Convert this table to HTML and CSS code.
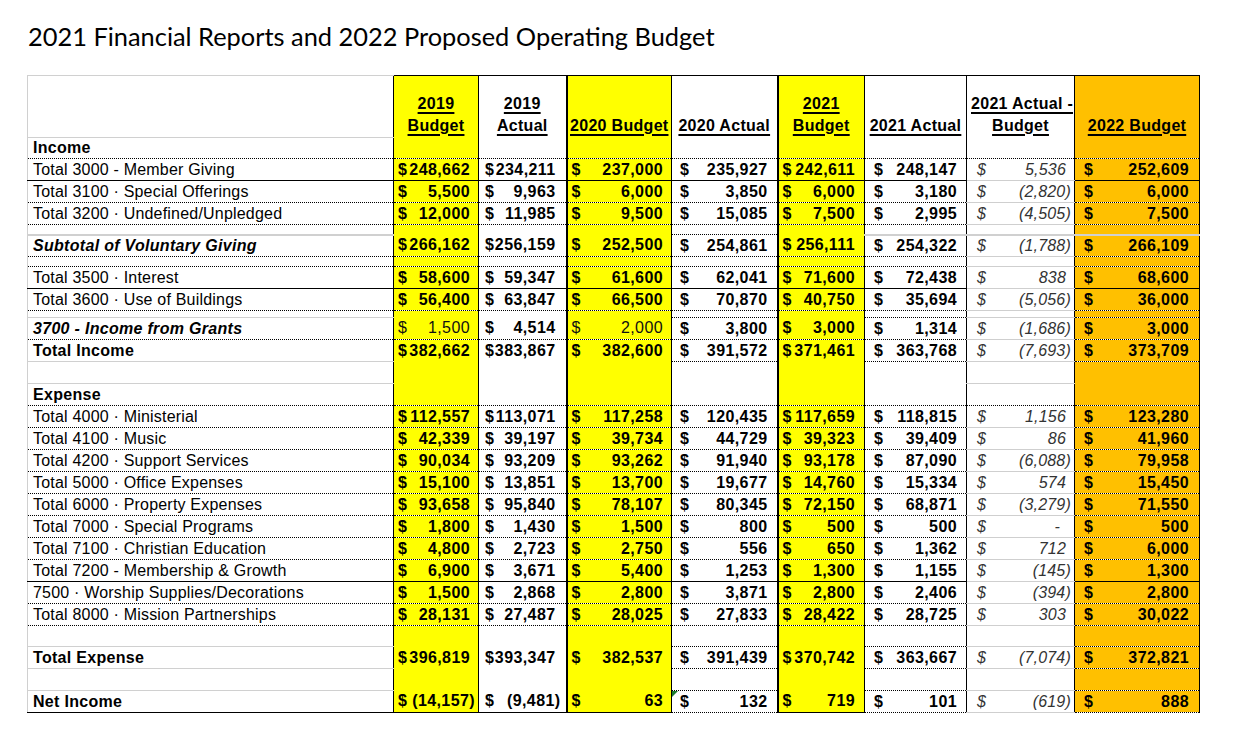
FILE: index.html
```html
<!DOCTYPE html>
<html lang="en">
<head>
<meta charset="utf-8">
<title>2021 Financial Reports and 2022 Proposed Operating Budget</title>
<link rel="stylesheet" href="styles.css">
</head>
<body>
<div class="page">
<h1 class="title">2021 Financial Reports and 2022 Proposed Operating Budget</h1>
<table class="budget">
<colgroup>
<col class="c-lbl"><col class="c-y19b"><col class="c-a19"><col class="c-y20b"><col class="c-a20"><col class="c-y21b"><col class="c-a21"><col class="c-dif"><col class="c-b22">
</colgroup>
<thead>
<tr class="hdr">
<th class="lh"></th>
<th>2019<br>Budget</th>
<th>2019<br>Actual</th>
<th>2020 Budget</th>
<th>2020 Actual</th>
<th>2021<br>Budget</th>
<th>2021 Actual</th>
<th><div class="hl">2021 Actual -</div><div>Budget</div></th>
<th>2022 Budget</th>
</tr>
</thead>
<tbody>
<tr class="bd sec h21"><td class="lb">Income</td><td></td><td></td><td></td><td></td><td></td><td></td><td></td><td></td></tr>
<tr class="bs"><td>Total 3000 - Member Giving</td>
<td><div class="v"><span>$</span><span class="n">248,662</span></div></td>
<td><div class="v"><span>$</span><span class="n">234,211</span></div></td>
<td><div class="v"><span>$</span><span class="n">237,000</span></div></td>
<td><div class="v"><span>$</span><span class="n">235,927</span></div></td>
<td><div class="v"><span>$</span><span class="n">242,611</span></div></td>
<td><div class="v"><span>$</span><span class="n">248,147</span></div></td>
<td><div class="v"><span>$</span><span class="n">5,536</span></div></td>
<td><div class="v"><span>$</span><span class="n">252,609</span></div></td></tr>
<tr class="bd"><td>Total 3100 · Special Offerings</td>
<td><div class="v"><span>$</span><span class="n">5,500</span></div></td>
<td><div class="v"><span>$</span><span class="n">9,963</span></div></td>
<td><div class="v"><span>$</span><span class="n">6,000</span></div></td>
<td><div class="v"><span>$</span><span class="n">3,850</span></div></td>
<td><div class="v"><span>$</span><span class="n">6,000</span></div></td>
<td><div class="v"><span>$</span><span class="n">3,180</span></div></td>
<td><div class="v"><span>$</span><span class="n ng">(2,820)</span></div></td>
<td><div class="v"><span>$</span><span class="n">6,000</span></div></td></tr>
<tr class="bd"><td>Total 3200 · Undefined/Unpledged</td>
<td><div class="v"><span>$</span><span class="n">12,000</span></div></td>
<td><div class="v"><span>$</span><span class="n">11,985</span></div></td>
<td><div class="v"><span>$</span><span class="n">9,500</span></div></td>
<td><div class="v"><span>$</span><span class="n">15,085</span></div></td>
<td><div class="v"><span>$</span><span class="n">7,500</span></div></td>
<td><div class="v"><span>$</span><span class="n">2,995</span></div></td>
<td><div class="v"><span>$</span><span class="n ng">(4,505)</span></div></td>
<td><div class="v"><span>$</span><span class="n">7,500</span></div></td></tr>
<tr class="bg2 h10"><td></td><td></td><td></td><td></td><td></td><td></td><td></td><td></td><td></td></tr>
<tr class="bd"><td class="lbi">Subtotal of Voluntary Giving</td>
<td><div class="v"><span>$</span><span class="n">266,162</span></div></td>
<td><div class="v"><span>$</span><span class="n">256,159</span></div></td>
<td><div class="v"><span>$</span><span class="n">252,500</span></div></td>
<td><div class="v"><span>$</span><span class="n">254,861</span></div></td>
<td><div class="v"><span>$</span><span class="n">256,111</span></div></td>
<td><div class="v"><span>$</span><span class="n">254,322</span></div></td>
<td><div class="v"><span>$</span><span class="n ng">(1,788)</span></div></td>
<td><div class="v"><span>$</span><span class="n">266,109</span></div></td></tr>
<tr class="bd h10"><td></td><td></td><td></td><td></td><td></td><td></td><td></td><td></td><td></td></tr>
<tr class="bs"><td>Total 3500 · Interest</td>
<td><div class="v"><span>$</span><span class="n">58,600</span></div></td>
<td><div class="v"><span>$</span><span class="n">59,347</span></div></td>
<td><div class="v"><span>$</span><span class="n">61,600</span></div></td>
<td><div class="v"><span>$</span><span class="n">62,041</span></div></td>
<td><div class="v"><span>$</span><span class="n">71,600</span></div></td>
<td><div class="v"><span>$</span><span class="n">72,438</span></div></td>
<td><div class="v"><span>$</span><span class="n">838</span></div></td>
<td><div class="v"><span>$</span><span class="n">68,600</span></div></td></tr>
<tr class="bd"><td>Total 3600 · Use of Buildings</td>
<td><div class="v"><span>$</span><span class="n">56,400</span></div></td>
<td><div class="v"><span>$</span><span class="n">63,847</span></div></td>
<td><div class="v"><span>$</span><span class="n">66,500</span></div></td>
<td><div class="v"><span>$</span><span class="n">70,870</span></div></td>
<td><div class="v"><span>$</span><span class="n">40,750</span></div></td>
<td><div class="v"><span>$</span><span class="n">35,694</span></div></td>
<td><div class="v"><span>$</span><span class="n ng">(5,056)</span></div></td>
<td><div class="v"><span>$</span><span class="n">36,000</span></div></td></tr>
<tr class="bg h7"><td></td><td></td><td></td><td></td><td></td><td></td><td></td><td></td><td></td></tr>
<tr class="bd"><td class="lbi">3700 - Income from Grants</td>
<td class="rg"><div class="v"><span>$</span><span class="n">1,500</span></div></td>
<td><div class="v"><span>$</span><span class="n">4,514</span></div></td>
<td class="rg"><div class="v"><span>$</span><span class="n">2,000</span></div></td>
<td><div class="v"><span>$</span><span class="n">3,800</span></div></td>
<td><div class="v"><span>$</span><span class="n">3,000</span></div></td>
<td><div class="v"><span>$</span><span class="n">1,314</span></div></td>
<td><div class="v"><span>$</span><span class="n ng">(1,686)</span></div></td>
<td><div class="v"><span>$</span><span class="n">3,000</span></div></td></tr>
<tr class="bg"><td class="lb">Total Income</td>
<td><div class="v"><span>$</span><span class="n">382,662</span></div></td>
<td><div class="v"><span>$</span><span class="n">383,867</span></div></td>
<td><div class="v"><span>$</span><span class="n">382,600</span></div></td>
<td><div class="v"><span>$</span><span class="n">391,572</span></div></td>
<td><div class="v"><span>$</span><span class="n">371,461</span></div></td>
<td><div class="v"><span>$</span><span class="n">363,768</span></div></td>
<td><div class="v"><span>$</span><span class="n ng">(7,693)</span></div></td>
<td><div class="v"><span>$</span><span class="n">373,709</span></div></td></tr>
<tr class="bgl"><td></td><td></td><td></td><td></td><td></td><td></td><td></td><td></td><td></td></tr>
<tr class="bd sec"><td class="lb">Expense</td><td></td><td></td><td></td><td></td><td></td><td></td><td></td><td></td></tr>
<tr class="bd"><td>Total 4000 · Ministerial</td>
<td><div class="v"><span>$</span><span class="n">112,557</span></div></td>
<td><div class="v"><span>$</span><span class="n">113,071</span></div></td>
<td><div class="v"><span>$</span><span class="n">117,258</span></div></td>
<td><div class="v"><span>$</span><span class="n">120,435</span></div></td>
<td><div class="v"><span>$</span><span class="n">117,659</span></div></td>
<td><div class="v"><span>$</span><span class="n">118,815</span></div></td>
<td><div class="v"><span>$</span><span class="n">1,156</span></div></td>
<td><div class="v"><span>$</span><span class="n">123,280</span></div></td></tr>
<tr class="bd"><td>Total 4100 · Music</td>
<td><div class="v"><span>$</span><span class="n">42,339</span></div></td>
<td><div class="v"><span>$</span><span class="n">39,197</span></div></td>
<td><div class="v"><span>$</span><span class="n">39,734</span></div></td>
<td><div class="v"><span>$</span><span class="n">44,729</span></div></td>
<td><div class="v"><span>$</span><span class="n">39,323</span></div></td>
<td><div class="v"><span>$</span><span class="n">39,409</span></div></td>
<td><div class="v"><span>$</span><span class="n">86</span></div></td>
<td><div class="v"><span>$</span><span class="n">41,960</span></div></td></tr>
<tr class="bd"><td>Total 4200 · Support Services</td>
<td><div class="v"><span>$</span><span class="n">90,034</span></div></td>
<td><div class="v"><span>$</span><span class="n">93,209</span></div></td>
<td><div class="v"><span>$</span><span class="n">93,262</span></div></td>
<td><div class="v"><span>$</span><span class="n">91,940</span></div></td>
<td><div class="v"><span>$</span><span class="n">93,178</span></div></td>
<td><div class="v"><span>$</span><span class="n">87,090</span></div></td>
<td><div class="v"><span>$</span><span class="n ng">(6,088)</span></div></td>
<td><div class="v"><span>$</span><span class="n">79,958</span></div></td></tr>
<tr class="bd"><td>Total 5000 · Office Expenses</td>
<td><div class="v"><span>$</span><span class="n">15,100</span></div></td>
<td><div class="v"><span>$</span><span class="n">13,851</span></div></td>
<td><div class="v"><span>$</span><span class="n">13,700</span></div></td>
<td><div class="v"><span>$</span><span class="n">19,677</span></div></td>
<td><div class="v"><span>$</span><span class="n">14,760</span></div></td>
<td><div class="v"><span>$</span><span class="n">15,334</span></div></td>
<td><div class="v"><span>$</span><span class="n">574</span></div></td>
<td><div class="v"><span>$</span><span class="n">15,450</span></div></td></tr>
<tr class="bd"><td>Total 6000 · Property Expenses</td>
<td><div class="v"><span>$</span><span class="n">93,658</span></div></td>
<td><div class="v"><span>$</span><span class="n">95,840</span></div></td>
<td><div class="v"><span>$</span><span class="n">78,107</span></div></td>
<td><div class="v"><span>$</span><span class="n">80,345</span></div></td>
<td><div class="v"><span>$</span><span class="n">72,150</span></div></td>
<td><div class="v"><span>$</span><span class="n">68,871</span></div></td>
<td><div class="v"><span>$</span><span class="n ng">(3,279)</span></div></td>
<td><div class="v"><span>$</span><span class="n">71,550</span></div></td></tr>
<tr class="bd"><td>Total 7000 · Special Programs</td>
<td><div class="v"><span>$</span><span class="n">1,800</span></div></td>
<td><div class="v"><span>$</span><span class="n">1,430</span></div></td>
<td><div class="v"><span>$</span><span class="n">1,500</span></div></td>
<td><div class="v"><span>$</span><span class="n">800</span></div></td>
<td><div class="v"><span>$</span><span class="n">500</span></div></td>
<td><div class="v"><span>$</span><span class="n">500</span></div></td>
<td><div class="v"><span>$</span><span class="n zero">-</span></div></td>
<td><div class="v"><span>$</span><span class="n">500</span></div></td></tr>
<tr class="bd"><td>Total 7100 · Christian Education</td>
<td><div class="v"><span>$</span><span class="n">4,800</span></div></td>
<td><div class="v"><span>$</span><span class="n">2,723</span></div></td>
<td><div class="v"><span>$</span><span class="n">2,750</span></div></td>
<td><div class="v"><span>$</span><span class="n">556</span></div></td>
<td><div class="v"><span>$</span><span class="n">650</span></div></td>
<td><div class="v"><span>$</span><span class="n">1,362</span></div></td>
<td><div class="v"><span>$</span><span class="n">712</span></div></td>
<td><div class="v"><span>$</span><span class="n">6,000</span></div></td></tr>
<tr class="bs"><td>Total 7200 - Membership &amp; Growth</td>
<td><div class="v"><span>$</span><span class="n">6,900</span></div></td>
<td><div class="v"><span>$</span><span class="n">3,671</span></div></td>
<td><div class="v"><span>$</span><span class="n">5,400</span></div></td>
<td><div class="v"><span>$</span><span class="n">1,253</span></div></td>
<td><div class="v"><span>$</span><span class="n">1,300</span></div></td>
<td><div class="v"><span>$</span><span class="n">1,155</span></div></td>
<td><div class="v"><span>$</span><span class="n ng">(145)</span></div></td>
<td><div class="v"><span>$</span><span class="n">1,300</span></div></td></tr>
<tr class="bd"><td>7500 · Worship Supplies/Decorations</td>
<td><div class="v"><span>$</span><span class="n">1,500</span></div></td>
<td><div class="v"><span>$</span><span class="n">2,868</span></div></td>
<td><div class="v"><span>$</span><span class="n">2,800</span></div></td>
<td><div class="v"><span>$</span><span class="n">3,871</span></div></td>
<td><div class="v"><span>$</span><span class="n">2,800</span></div></td>
<td><div class="v"><span>$</span><span class="n">2,406</span></div></td>
<td><div class="v"><span>$</span><span class="n ng">(394)</span></div></td>
<td><div class="v"><span>$</span><span class="n">2,800</span></div></td></tr>
<tr class="bd"><td>Total 8000 · Mission Partnerships</td>
<td><div class="v"><span>$</span><span class="n">28,131</span></div></td>
<td><div class="v"><span>$</span><span class="n">27,487</span></div></td>
<td><div class="v"><span>$</span><span class="n">28,025</span></div></td>
<td><div class="v"><span>$</span><span class="n">27,833</span></div></td>
<td><div class="v"><span>$</span><span class="n">28,422</span></div></td>
<td><div class="v"><span>$</span><span class="n">28,725</span></div></td>
<td><div class="v"><span>$</span><span class="n">303</span></div></td>
<td><div class="v"><span>$</span><span class="n">30,022</span></div></td></tr>
<tr class="bg h21"><td></td><td></td><td></td><td></td><td></td><td></td><td></td><td></td><td></td></tr>
<tr class="bg"><td class="lb">Total Expense</td>
<td><div class="v"><span>$</span><span class="n">396,819</span></div></td>
<td><div class="v"><span>$</span><span class="n">393,347</span></div></td>
<td><div class="v"><span>$</span><span class="n">382,537</span></div></td>
<td><div class="v"><span>$</span><span class="n">391,439</span></div></td>
<td><div class="v"><span>$</span><span class="n">370,742</span></div></td>
<td><div class="v"><span>$</span><span class="n">363,667</span></div></td>
<td><div class="v"><span>$</span><span class="n ng">(7,074)</span></div></td>
<td><div class="v"><span>$</span><span class="n">372,821</span></div></td></tr>
<tr class="bg"><td></td><td></td><td></td><td></td><td></td><td></td><td></td><td></td><td></td></tr>
<tr class="bn"><td class="lb">Net Income</td>
<td><div class="v"><span>$</span><span class="n ng">(14,157)</span></div></td>
<td><div class="v"><span>$</span><span class="n ng">(9,481)</span></div></td>
<td><div class="v"><span>$</span><span class="n">63</span></div></td>
<td class="flag"><div class="v"><span>$</span><span class="n">132</span></div></td>
<td><div class="v"><span>$</span><span class="n">719</span></div></td>
<td><div class="v"><span>$</span><span class="n">101</span></div></td>
<td><div class="v"><span>$</span><span class="n ng">(619)</span></div></td>
<td><div class="v"><span>$</span><span class="n">888</span></div></td></tr>
</tbody>
</table>
</div>
</body>
</html>
```

FILE: styles.css
```css
* { box-sizing: border-box; }

body {
  margin: 0;
  background: #ffffff;
  color: #000000;
  font-family: "Liberation Sans", Arial, sans-serif;
}

.page {
  padding: 21px 0 0 27px;
}

.title {
  margin: 0 0 24px 1px;
  font-family: Lato, "Open Sans", sans-serif;
  font-weight: 400;
  font-size: 25.4px;
  line-height: 30px;
  color: #000;
}

.budget {
  border-collapse: collapse;
  table-layout: fixed;
  width: 1173px;
  font-size: 16px;
}

/* columns */
.c-lbl { width: 366px; border-left: 1px solid #d0d0d0; border-right: 1px solid #000; }
.c-y19b { width: 85px; background: #ffff00; border-right: 1px solid #000; }
.c-a19 { width: 88px; border-right: 2px solid #000; }
.c-y20b { width: 105px; background: #ffff00; border-right: 1px solid #000; }
.c-a20 { width: 106px; border-right: 2px solid #000; }
.c-y21b { width: 87px; background: #ffff00; border-right: 1px solid #000; }
.c-a21 { width: 102px; border-right: 1px solid #000; }
.c-dif { width: 108px; border-right: 1px solid #000; }
.c-b22 { width: 125px; background: #ffc000; border-right: 1px solid #000; }

/* header */
.hdr th {
  height: 62px;
  padding: 0 0 1px;
  vertical-align: bottom;
  font-weight: 700;
  line-height: 22px;
  letter-spacing: 0.3px;
  text-align: center;
  white-space: nowrap;
  overflow: hidden;
  text-decoration: underline;
  text-decoration-thickness: 2px;
  text-underline-offset: 3px;
  border-top: 1px solid #000;
}

.hdr th.lh {
  border-top: 1px solid #d0d0d0;
  border-bottom: 1px solid #d0d0d0;
  text-decoration: none;
}

.hdr .hl {
  text-align: left;
  padding-left: 4px;
  overflow: hidden;
  white-space: nowrap;
}

/* body cells */
.budget td {
  height: 22px;
  padding: 0;
  line-height: 20px;
  white-space: nowrap;
  overflow: hidden;
  vertical-align: middle;
  font-weight: 700;
  letter-spacing: 0.4px;
}

.budget tr.h21 td { height: 21px; }
.budget tr.h10 td { height: 10px; }
.budget tr.h7 td { height: 7px; }

.budget td:first-child {
  padding-left: 5px;
  font-weight: 400;
  letter-spacing: 0.2px;
}

.budget td.lb { font-weight: 700; letter-spacing: 0.3px; }
.budget td.lbi { font-weight: 700; font-style: italic; letter-spacing: 0.3px; }

.v {
  display: flex;
  justify-content: space-between;
  align-items: center;
}

.n { padding-right: 5px; }
.n.ng { padding-right: 0; }
.n.zero { padding-right: 11px; }

.budget td:nth-child(2) { padding: 0 3px 0 4px; }
.budget td:nth-child(3) { padding: 0 5px 0 6px; }
.budget td:nth-child(4) { padding: 0 3px 0 4px; }
.budget td:nth-child(5) { padding: 0 4px 0 8px; }
.budget td:nth-child(6) { padding: 0 4px 0 4px; }
.budget td:nth-child(7) { padding: 0 4px 0 9px; }
.budget td:nth-child(8) {
  padding: 0 3px 0 10px;
  font-weight: 400;
  font-style: italic;
  color: #333333;
  letter-spacing: 0.2px;
}
.budget td:nth-child(9) { padding: 0 5px 0 9px; }

.budget td.rg { font-weight: 400; color: #111111; }

/* row borders */
tr.bd td { border-bottom: 1px dotted #000; }
tr.bs td { border-bottom: 1px solid #000; }

tr.bg td:nth-child(1),
tr.bgl td:nth-child(1) { border-bottom: 1px solid #d0d0d0; }
tr.bg td:nth-child(5),
tr.bg td:nth-child(7),
tr.bg td:nth-child(9) { border-bottom: 1px dotted #000; }

tr.bg2 td:nth-child(1),
tr.bg2 td:nth-child(7),
tr.bg2 td:nth-child(9) { border-bottom: 2px solid #d0d0d0; }
tr.bg2 td:nth-child(5) { border-bottom: 1px dotted #000; }

tr.bn td { border-bottom: 1px solid #000; }
tr.bn td:nth-child(5),
tr.bn td:nth-child(7),
tr.bn td:nth-child(9) { border-bottom: 1px dotted #000; }

.budget tr td:nth-child(8) { border-bottom: 1px solid #cfcfcf; }
.budget tr.bg2 td:nth-child(8) { border-bottom: 2px solid #d0d0d0; }
.budget tr.sec td:nth-child(8) { border-bottom: 1px dotted #000; }

/* excel error indicator */
.budget td.flag { position: relative; }
.budget td.flag::before {
  content: "";
  position: absolute;
  top: 0;
  left: 0;
  border-top: 6px solid #1e7b2e;
  border-right: 6px solid transparent;
}
```
